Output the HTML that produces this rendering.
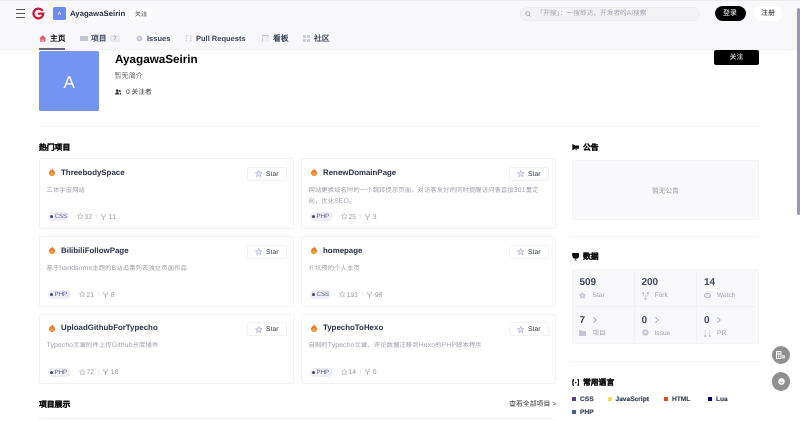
<!DOCTYPE html>
<html lang="zh-CN"><head><meta charset="utf-8">
<style>
*{box-sizing:border-box;margin:0;padding:0}
html,body{width:800px;height:421px;overflow:hidden;background:#fff;text-rendering:geometricPrecision;font-family:"Liberation Sans",sans-serif;color:#1f2329}
.a{position:absolute;white-space:nowrap}
.hdr{position:absolute;left:0;top:0;width:800px;height:50px;background:#f8f8fa}
.topline{position:absolute;left:0;top:0;width:800px;height:1px;background:#ebebee}
.ham{position:absolute;left:16px;width:9px;height:1px;background:#5a5a5a}
.nav{font-size:7.8px;font-weight:bold;color:#40485b;top:34.5px;line-height:8px}
.card{position:absolute;width:255px;height:70.5px;border:1px solid #f2f2f5;border-radius:2px;background:#fff}
.ttl{position:absolute;left:21px;top:8.5px;font-size:7.9px;font-weight:bold;color:#2e3447;white-space:nowrap;line-height:10px}
.flame{position:absolute;left:9px;top:9px;width:6px;height:8px}
.lt{font-size:6.9px;letter-spacing:0.1px}
.desc{position:absolute;left:6.5px;top:25.5px;font-size:6.3px;letter-spacing:0.12px;color:#a2a3ad;line-height:11px;width:238px}
.sbtn{position:absolute;left:207px;top:7.5px;width:40px;height:14px;border:1px solid #f2f2f5;border-radius:2px;background:#fff}
.sbtn svg{position:absolute;left:6.8px;top:2.6px}
.sbtn span{position:absolute;left:18px;top:3px;font-size:6.8px;color:#2e3447;line-height:8px}
.tag{position:absolute;left:7.5px;top:53px;height:9px;border-radius:4.5px;background:#efeef7;font-size:6.2px;color:#5a5f85;line-height:10px;padding:0 3px 0 7px}
.tag:before{content:"";position:absolute;left:2.5px;top:3px;width:3px;height:3px;border-radius:50%;background:#3d4160}
.cnt{position:absolute;top:54.3px;font-size:6.8px;color:#9a9ba6;line-height:9px}
.meta{position:absolute;left:7.5px;top:53px;height:9px;display:flex;align-items:center;white-space:nowrap}
.tag2{position:relative;height:9px;border-radius:4.5px;background:#efeef7;font-size:6.2px;color:#5a5f85;line-height:10px;padding:0 0 0 7px;flex:none}
.tag2 i{position:absolute;left:2.5px;top:3px;width:3px;height:3px;border-radius:50%;background:#3d4160}
.ic{display:block;line-height:0;flex:none}
.num{font-size:6.8px;color:#9a9ba6;line-height:9px;flex:none;position:relative;top:0.9px}
.sep{display:block;width:0.8px;height:5px;background:#eeeef2;margin:0 4px;flex:none}
.cnt svg{position:absolute;top:1.5px}
.sec{font-size:7.8px;font-weight:900;color:#111;line-height:9px;-webkit-text-stroke:0.25px #111}
.line{position:absolute;height:1px;background:#f4f4f6}
</style></head><body style="will-change:transform">
<div class="hdr"></div>
<div class="topline"></div>
<div class="a" style="left:0;top:49px;width:800px;height:1px;background:#f2f2f4"></div>
<div class="ham" style="top:9px"></div>
<div class="ham" style="top:13px"></div>
<div class="ham" style="top:17px"></div>
<svg class="a" style="left:32px;top:7px" width="13" height="13" viewBox="0 0 13 13"><path d="M10 3.1 A4.9 4.9 0 1 0 11.3 6.7 L6.9 6.7" fill="none" stroke="#c71d3a" stroke-width="2.3" stroke-linecap="round"/></svg>
<div class="a" style="left:53px;top:7px;width:13px;height:13px;background:#6b8cee;border-radius:1.5px;color:#fff;font-size:5px;line-height:15px;text-align:center">A</div>
<div class="a" style="left:70px;top:9px;font-size:7.8px;font-weight:bold;color:#2e3447;line-height:9px">AyagawaSeirin</div>
<div class="a" style="left:130px;top:8px;width:22px;height:12px;background:#fff;border-radius:2px;font-size:6.3px;color:#444;line-height:14px;text-align:center">关注</div>

<div class="a" style="left:520px;top:6.5px;width:180px;height:14px;background:#f3f3f6;border:1px solid #ededf1;border-radius:7px"></div>
<svg class="a" style="left:525px;top:10.5px" width="6" height="6" viewBox="0 0 6 6"><circle cx="2.6" cy="2.6" r="2" fill="none" stroke="#9a9aa4" stroke-width="0.8"/><path d="M4 4 L5.5 5.5" stroke="#9a9aa4" stroke-width="0.8"/></svg>
<div class="a" style="left:536.5px;top:9.5px;font-size:6.7px;color:#a5a6b0;line-height:8px">「开搜」：一搜即达，开发者的AI搜索</div>
<div class="a" style="left:714.5px;top:5.5px;width:31px;height:15.5px;background:#000;border-radius:8px;color:#fff;font-size:6.9px;line-height:16.5px;text-align:center">登录</div>
<div class="a" style="left:753.5px;top:5.5px;width:29px;height:15.5px;background:#fff;border-radius:8px;color:#222;font-size:6.9px;line-height:16.5px;text-align:center">注册</div>

<!-- nav -->
<svg class="a" style="left:39px;top:34.5px" width="7.5" height="7" viewBox="0 0 7.5 7"><path d="M3.75 0.3 L7.2 3.4 L6.3 3.4 L6.3 6.7 L1.2 6.7 L1.2 3.4 L0.3 3.4 Z" fill="#e25a6c"/><path d="M2.6 6.7 V4.6 H4.9 V6.7" fill="#f3b5bd"/></svg>
<div class="a nav" style="left:50px;color:#000;font-weight:900">主页</div>
<div class="a" style="left:39px;top:47.8px;width:26px;height:2px;background:#66676f"></div>
<div class="a" style="left:80px;top:36px;width:7.5px;height:5px;background:#c4c5d4;border-radius:0.5px"></div>
<div class="a nav" style="left:91px">项目</div>
<div class="a" style="left:110px;top:35px;width:10px;height:7px;background:#e8e8ee;border-radius:1.5px;font-size:5.5px;color:#8a8b98;line-height:8px;text-align:center">7</div>
<svg class="a" style="left:136px;top:35px" width="7" height="7" viewBox="0 0 7 7"><circle cx="3.5" cy="3.5" r="2.8" fill="#c4c5d4"/><circle cx="3.5" cy="3.5" r="1" fill="#f8f8fa"/></svg>
<div class="a nav" style="left:147px;font-size:7.5px">Issues</div>
<svg class="a" style="left:185px;top:34.5px" width="7" height="7.5" viewBox="0 0 7 7.5"><path d="M1.2 0.5 V7 M5.8 0.5 V7" fill="none" stroke="#bdbdcc" stroke-width="1" stroke-dasharray="1.3 0.9"/><path d="M2.4 0.8 H3.6 M3.4 6.7 H4.6" stroke="#c8c8d6" stroke-width="0.8"/></svg>
<div class="a nav" style="left:196px;font-size:7.5px">Pull Requests</div>
<svg class="a" style="left:261.5px;top:35px" width="7" height="7" viewBox="0 0 7 7"><rect x="0" y="0" width="7" height="1.3" fill="#c4c5d4"/><rect x="0" y="2.2" width="1.2" height="4.8" fill="#d2d2de"/><rect x="2.5" y="2.2" width="4.5" height="4.8" fill="#ededf2"/></svg>
<div class="a nav" style="left:273px">看板</div>
<svg class="a" style="left:303px;top:35px" width="7" height="7" viewBox="0 0 7 7"><rect x="0" y="0" width="3" height="3" fill="#cdcdda"/><rect x="4" y="0" width="3" height="3" fill="#cdcdda"/><rect x="0" y="4" width="3" height="3" fill="#cdcdda"/><rect x="4" y="4" width="3" height="3" fill="#cdcdda"/></svg>
<div class="a nav" style="left:314px">社区</div>

<!-- profile -->
<div class="a" style="left:39px;top:50.7px;width:60.2px;height:60px;background:#7394f0;border-radius:1.5px;color:#fff;font-size:17px;line-height:64px;text-align:center">A</div>
<div class="a" style="left:115px;top:53px;font-size:11.7px;font-weight:bold;color:#000;line-height:14px">AyagawaSeirin</div>
<div class="a" style="left:114.5px;top:72px;font-size:7.1px;color:#666;line-height:9px">暂无简介</div>
<svg class="a" style="left:114.5px;top:89px" width="6.5" height="5.8" viewBox="0 0 6 5"><circle cx="2" cy="1.3" r="1.2" fill="#333"/><path d="M0 5 Q0 2.6 2 2.6 Q4 2.6 4 5Z" fill="#333"/><circle cx="4.4" cy="1.6" r="0.9" fill="#333"/><path d="M4.4 5 L6 5 Q6 3 4.6 3Z" fill="#333"/></svg>
<div class="a" style="left:126px;top:87.5px;font-size:6.7px;color:#333;line-height:9px">0 关注者</div>
<div class="a" style="left:714px;top:50px;width:45px;height:15.3px;background:#000;border-radius:2px;color:#fff;font-size:6.7px;line-height:16px;text-align:center">关注</div>

<div class="line" style="left:39px;top:126px;width:720px"></div>

<!-- left: hot projects -->
<div class="a sec" style="left:39px;top:143px">热门项目</div>

<div class="card" style="left:39px;top:158px"><svg class="flame" viewBox="0 0 6 8"><path d="M2.9 0.2 C3.6 1.5 6 3 6 5.1 C6 6.8 4.7 8 3 8 C1.3 8 0 6.8 0 5.1 C0 3.4 1.6 2.6 2 1.6 C2.3 2.2 2.4 2.6 2.5 3 C2.8 2.2 2.9 1.2 2.9 0.2Z" fill="#ea7324"/><path d="M3 3.4 C3.8 4.3 4.9 5 4.9 6 C4.9 7 4.1 7.6 3 7.6 C1.9 7.6 1.1 7 1.1 6 C1.1 5 2.3 4.4 3 3.4Z" fill="#f8a23a"/></svg><div class="ttl">ThreebodySpace</div>
<div class="sbtn"><svg width="7.5" height="7.5" viewBox="0 0 10 10"><path d="M5 0.6 L6.3 3.4 L9.4 3.7 L7.1 5.8 L7.8 8.9 L5 7.3 L2.2 8.9 L2.9 5.8 L0.6 3.7 L3.7 3.4Z" fill="#ebebf3" stroke="#a9a9c6" stroke-width="0.9" stroke-linejoin="round"/></svg><span>Star</span></div>
<div class="desc">三体宇宙网站</div>
<div class="meta"><div class="tag2" style="width:21px"><i></i>CSS</div><span class="ic" style="margin-left:8px"><svg width="6.5" height="6.5" viewBox="0 0 10 10"><path d="M5 0.6 L6.3 3.4 L9.4 3.7 L7.1 5.8 L7.8 8.9 L5 7.3 L2.2 8.9 L2.9 5.8 L0.6 3.7 L3.7 3.4Z" fill="none" stroke="#a0a1ad" stroke-width="0.9" stroke-linejoin="round"/></svg></span><span class="num" style="margin-left:1.5px">32</span><span class="sep"></span><span class="ic" style="margin-left:0"><svg width="5" height="6" viewBox="0 0 5 6"><path d="M0.8 0 V1.6 Q0.8 3 2.5 3 Q4.2 3 4.2 1.6 V0 M2.5 3 V6" fill="none" stroke="#a0a1ad" stroke-width="0.8"/></svg></span><span class="num" style="margin-left:3px">11</span></div>
</div>
<div class="card" style="left:301px;top:158px"><svg class="flame" viewBox="0 0 6 8"><path d="M2.9 0.2 C3.6 1.5 6 3 6 5.1 C6 6.8 4.7 8 3 8 C1.3 8 0 6.8 0 5.1 C0 3.4 1.6 2.6 2 1.6 C2.3 2.2 2.4 2.6 2.5 3 C2.8 2.2 2.9 1.2 2.9 0.2Z" fill="#ea7324"/><path d="M3 3.4 C3.8 4.3 4.9 5 4.9 6 C4.9 7 4.1 7.6 3 7.6 C1.9 7.6 1.1 7 1.1 6 C1.1 5 2.3 4.4 3 3.4Z" fill="#f8a23a"/></svg><div class="ttl">RenewDomainPage</div>
<div class="sbtn"><svg width="7.5" height="7.5" viewBox="0 0 10 10"><path d="M5 0.6 L6.3 3.4 L9.4 3.7 L7.1 5.8 L7.8 8.9 L5 7.3 L2.2 8.9 L2.9 5.8 L0.6 3.7 L3.7 3.4Z" fill="#ebebf3" stroke="#a9a9c6" stroke-width="0.9" stroke-linejoin="round"/></svg><span>Star</span></div>
<div class="desc">网站更换域名时的一个跳转提示页面，对访客友好的同时提醒访问者直接<span class="lt">301</span>重定<br>向，优化<span class="lt">SEO</span>。</div>
<div class="meta"><div class="tag2" style="width:23px"><i></i>PHP</div><span class="ic" style="margin-left:8px"><svg width="6.5" height="6.5" viewBox="0 0 10 10"><path d="M5 0.6 L6.3 3.4 L9.4 3.7 L7.1 5.8 L7.8 8.9 L5 7.3 L2.2 8.9 L2.9 5.8 L0.6 3.7 L3.7 3.4Z" fill="none" stroke="#a0a1ad" stroke-width="0.9" stroke-linejoin="round"/></svg></span><span class="num" style="margin-left:1.5px">25</span><span class="sep"></span><span class="ic" style="margin-left:0"><svg width="5" height="6" viewBox="0 0 5 6"><path d="M0.8 0 V1.6 Q0.8 3 2.5 3 Q4.2 3 4.2 1.6 V0 M2.5 3 V6" fill="none" stroke="#a0a1ad" stroke-width="0.8"/></svg></span><span class="num" style="margin-left:3px">3</span></div>
</div>
<div class="card" style="left:39px;top:236px"><svg class="flame" viewBox="0 0 6 8"><path d="M2.9 0.2 C3.6 1.5 6 3 6 5.1 C6 6.8 4.7 8 3 8 C1.3 8 0 6.8 0 5.1 C0 3.4 1.6 2.6 2 1.6 C2.3 2.2 2.4 2.6 2.5 3 C2.8 2.2 2.9 1.2 2.9 0.2Z" fill="#ea7324"/><path d="M3 3.4 C3.8 4.3 4.9 5 4.9 6 C4.9 7 4.1 7.6 3 7.6 C1.9 7.6 1.1 7 1.1 6 C1.1 5 2.3 4.4 3 3.4Z" fill="#f8a23a"/></svg><div class="ttl">BilibiliFollowPage</div>
<div class="sbtn"><svg width="7.5" height="7.5" viewBox="0 0 10 10"><path d="M5 0.6 L6.3 3.4 L9.4 3.7 L7.1 5.8 L7.8 8.9 L5 7.3 L2.2 8.9 L2.9 5.8 L0.6 3.7 L3.7 3.4Z" fill="#ebebf3" stroke="#a9a9c6" stroke-width="0.9" stroke-linejoin="round"/></svg><span>Star</span></div>
<div class="desc">基于<span class="lt">handsome</span>主题的<span class="lt">B</span>站追番列表独立页面作品</div>
<div class="meta"><div class="tag2" style="width:23px"><i></i>PHP</div><span class="ic" style="margin-left:8px"><svg width="6.5" height="6.5" viewBox="0 0 10 10"><path d="M5 0.6 L6.3 3.4 L9.4 3.7 L7.1 5.8 L7.8 8.9 L5 7.3 L2.2 8.9 L2.9 5.8 L0.6 3.7 L3.7 3.4Z" fill="none" stroke="#a0a1ad" stroke-width="0.9" stroke-linejoin="round"/></svg></span><span class="num" style="margin-left:1.5px">21</span><span class="sep"></span><span class="ic" style="margin-left:0"><svg width="5" height="6" viewBox="0 0 5 6"><path d="M0.8 0 V1.6 Q0.8 3 2.5 3 Q4.2 3 4.2 1.6 V0 M2.5 3 V6" fill="none" stroke="#a0a1ad" stroke-width="0.8"/></svg></span><span class="num" style="margin-left:3px">8</span></div>
</div>
<div class="card" style="left:301px;top:236px"><svg class="flame" viewBox="0 0 6 8"><path d="M2.9 0.2 C3.6 1.5 6 3 6 5.1 C6 6.8 4.7 8 3 8 C1.3 8 0 6.8 0 5.1 C0 3.4 1.6 2.6 2 1.6 C2.3 2.2 2.4 2.6 2.5 3 C2.8 2.2 2.9 1.2 2.9 0.2Z" fill="#ea7324"/><path d="M3 3.4 C3.8 4.3 4.9 5 4.9 6 C4.9 7 4.1 7.6 3 7.6 C1.9 7.6 1.1 7 1.1 6 C1.1 5 2.3 4.4 3 3.4Z" fill="#f8a23a"/></svg><div class="ttl">homepage</div>
<div class="sbtn"><svg width="7.5" height="7.5" viewBox="0 0 10 10"><path d="M5 0.6 L6.3 3.4 L9.4 3.7 L7.1 5.8 L7.8 8.9 L5 7.3 L2.2 8.9 L2.9 5.8 L0.6 3.7 L3.7 3.4Z" fill="#ebebf3" stroke="#a9a9c6" stroke-width="0.9" stroke-linejoin="round"/></svg><span>Star</span></div>
<div class="desc">开坑预的个人主页</div>
<div class="meta"><div class="tag2" style="width:21px"><i></i>CSS</div><span class="ic" style="margin-left:8px"><svg width="6.5" height="6.5" viewBox="0 0 10 10"><path d="M5 0.6 L6.3 3.4 L9.4 3.7 L7.1 5.8 L7.8 8.9 L5 7.3 L2.2 8.9 L2.9 5.8 L0.6 3.7 L3.7 3.4Z" fill="none" stroke="#a0a1ad" stroke-width="0.9" stroke-linejoin="round"/></svg></span><span class="num" style="margin-left:1.5px">193</span><span class="sep"></span><span class="ic" style="margin-left:0"><svg width="5" height="6" viewBox="0 0 5 6"><path d="M0.8 0 V1.6 Q0.8 3 2.5 3 Q4.2 3 4.2 1.6 V0 M2.5 3 V6" fill="none" stroke="#a0a1ad" stroke-width="0.8"/></svg></span><span class="num" style="margin-left:3px">98</span></div>
</div>
<div class="card" style="left:39px;top:313.5px"><svg class="flame" viewBox="0 0 6 8"><path d="M2.9 0.2 C3.6 1.5 6 3 6 5.1 C6 6.8 4.7 8 3 8 C1.3 8 0 6.8 0 5.1 C0 3.4 1.6 2.6 2 1.6 C2.3 2.2 2.4 2.6 2.5 3 C2.8 2.2 2.9 1.2 2.9 0.2Z" fill="#ea7324"/><path d="M3 3.4 C3.8 4.3 4.9 5 4.9 6 C4.9 7 4.1 7.6 3 7.6 C1.9 7.6 1.1 7 1.1 6 C1.1 5 2.3 4.4 3 3.4Z" fill="#f8a23a"/></svg><div class="ttl">UploadGithubForTypecho</div>
<div class="sbtn"><svg width="7.5" height="7.5" viewBox="0 0 10 10"><path d="M5 0.6 L6.3 3.4 L9.4 3.7 L7.1 5.8 L7.8 8.9 L5 7.3 L2.2 8.9 L2.9 5.8 L0.6 3.7 L3.7 3.4Z" fill="#ebebf3" stroke="#a9a9c6" stroke-width="0.9" stroke-linejoin="round"/></svg><span>Star</span></div>
<div class="desc"><span class="lt">Typecho</span>文章附件上传<span class="lt">Github</span>仓库插件</div>
<div class="meta"><div class="tag2" style="width:23px"><i></i>PHP</div><span class="ic" style="margin-left:8px"><svg width="6.5" height="6.5" viewBox="0 0 10 10"><path d="M5 0.6 L6.3 3.4 L9.4 3.7 L7.1 5.8 L7.8 8.9 L5 7.3 L2.2 8.9 L2.9 5.8 L0.6 3.7 L3.7 3.4Z" fill="none" stroke="#a0a1ad" stroke-width="0.9" stroke-linejoin="round"/></svg></span><span class="num" style="margin-left:1.5px">72</span><span class="sep"></span><span class="ic" style="margin-left:0"><svg width="5" height="6" viewBox="0 0 5 6"><path d="M0.8 0 V1.6 Q0.8 3 2.5 3 Q4.2 3 4.2 1.6 V0 M2.5 3 V6" fill="none" stroke="#a0a1ad" stroke-width="0.8"/></svg></span><span class="num" style="margin-left:3px">18</span></div>
</div>
<div class="card" style="left:301px;top:313.5px"><svg class="flame" viewBox="0 0 6 8"><path d="M2.9 0.2 C3.6 1.5 6 3 6 5.1 C6 6.8 4.7 8 3 8 C1.3 8 0 6.8 0 5.1 C0 3.4 1.6 2.6 2 1.6 C2.3 2.2 2.4 2.6 2.5 3 C2.8 2.2 2.9 1.2 2.9 0.2Z" fill="#ea7324"/><path d="M3 3.4 C3.8 4.3 4.9 5 4.9 6 C4.9 7 4.1 7.6 3 7.6 C1.9 7.6 1.1 7 1.1 6 C1.1 5 2.3 4.4 3 3.4Z" fill="#f8a23a"/></svg><div class="ttl">TypechoToHexo</div>
<div class="sbtn"><svg width="7.5" height="7.5" viewBox="0 0 10 10"><path d="M5 0.6 L6.3 3.4 L9.4 3.7 L7.1 5.8 L7.8 8.9 L5 7.3 L2.2 8.9 L2.9 5.8 L0.6 3.7 L3.7 3.4Z" fill="#ebebf3" stroke="#a9a9c6" stroke-width="0.9" stroke-linejoin="round"/></svg><span>Star</span></div>
<div class="desc">自制的<span class="lt">Typecho</span>文章、评论数据迁移到<span class="lt">Hexo</span>的<span class="lt">PHP</span>脚本程序</div>
<div class="meta"><div class="tag2" style="width:23px"><i></i>PHP</div><span class="ic" style="margin-left:8px"><svg width="6.5" height="6.5" viewBox="0 0 10 10"><path d="M5 0.6 L6.3 3.4 L9.4 3.7 L7.1 5.8 L7.8 8.9 L5 7.3 L2.2 8.9 L2.9 5.8 L0.6 3.7 L3.7 3.4Z" fill="none" stroke="#a0a1ad" stroke-width="0.9" stroke-linejoin="round"/></svg></span><span class="num" style="margin-left:1.5px">14</span><span class="sep"></span><span class="ic" style="margin-left:0"><svg width="5" height="6" viewBox="0 0 5 6"><path d="M0.8 0 V1.6 Q0.8 3 2.5 3 Q4.2 3 4.2 1.6 V0 M2.5 3 V6" fill="none" stroke="#a0a1ad" stroke-width="0.8"/></svg></span><span class="num" style="margin-left:3px">0</span></div>
</div>

<div class="a sec" style="left:39px;top:400px">项目展示</div>
<div class="a" style="left:509px;top:399.5px;font-size:6.9px;color:#333;line-height:9px">查看全部项目 &gt;</div>
<div class="a" style="left:39px;top:418px;width:517px;height:10px;border:1px solid #f0f0f4;border-radius:3px"></div>

<!-- right column -->
<svg class="a" style="left:571.5px;top:144px" width="7.5" height="6.5" viewBox="0 0 7.5 6.5"><path d="M0.3 0 L3.2 1.6 H6.6 Q7.5 1.6 7.5 3.2 Q7.5 4.8 6.6 4.8 H3.2 L0.3 6.5Z" fill="#111"/><path d="M3.3 4.8 H5 V6.2 H3.8Z" fill="#444"/></svg>
<div class="a sec" style="left:583px;top:142.5px">公告</div>
<div class="a" style="left:572px;top:160px;width:187px;height:59.5px;background:#f9f9fb;border:1px solid #f4f4f7;border-radius:1px;font-size:6.8px;color:#9b9ca6;line-height:61px;text-align:center">暂无公告</div>
<div class="line" style="left:572px;top:235.5px;width:187px"></div>

<svg class="a" style="left:571.5px;top:252.5px" width="7.5" height="8.5" viewBox="0 0 7.5 8.5"><path d="M0.2 0 H7.3 Q7.6 3 6.6 4.6 Q5.6 6 3.75 6 Q1.9 6 0.9 4.6 Q-0.1 3 0.2 0Z" fill="#111"/><rect x="3.2" y="6" width="1.1" height="1.6" fill="#555"/><rect x="2" y="7.6" width="3.5" height="0.9" fill="#888"/></svg>
<div class="a sec" style="left:583px;top:252px">数据</div>
<div class="a" style="left:572px;top:269px;width:187px;height:75px;background:#f8f8fb;border:1px solid #f4f4f7;border-radius:1px"></div>
<div class="a" style="left:634px;top:272px;width:1px;height:69px;background:#f2f2f6"></div>
<div class="a" style="left:696px;top:272px;width:1px;height:69px;background:#f2f2f6"></div>
<div class="a" style="left:576px;top:306px;width:179px;height:1px;background:#f1f1f5"></div>
<div class="a" style="left:579.5px;top:277px;font-size:10px;font-weight:bold;color:#40485b;line-height:11px">509</div>
<div class="a" style="left:592.5px;top:292px;font-size:6.6px;color:#a2a3ad;line-height:8px">Star</div>
<div class="a" style="left:579.0px;top:291.8px;line-height:0"><svg width="7" height="7" viewBox="0 0 10 10"><path d="M5 0.8 L6.3 3.5 L9.3 3.8 L7.1 5.8 L7.7 8.8 L5 7.3 L2.3 8.8 L2.9 5.8 L0.7 3.8 L3.7 3.5Z" fill="#dedee8" stroke="#b8b8c8" stroke-width="1.1" stroke-linejoin="round"/></svg></div>
<div class="a" style="left:641.5px;top:277px;font-size:10px;font-weight:bold;color:#40485b;line-height:11px">200</div>
<div class="a" style="left:654.5px;top:292px;font-size:6.6px;color:#a2a3ad;line-height:8px">Fork</div>
<div class="a" style="left:641.7px;top:291.5px;line-height:0"><svg width="7" height="8" viewBox="0 0 7 8"><circle cx="1.2" cy="1.2" r="1.1" fill="#b8b8c8"/><circle cx="5.8" cy="1.2" r="1.1" fill="#b8b8c8"/><circle cx="3.5" cy="6.8" r="1.1" fill="#b8b8c8"/><path d="M1.2 1.5 V3 Q1.2 4 2.2 4 H4.8 Q5.8 4 5.8 3 V1.5 M3.5 4 V6.5" fill="none" stroke="#c3c3d3" stroke-width="0.7"/></svg></div>
<div class="a" style="left:704px;top:277px;font-size:10px;font-weight:bold;color:#40485b;line-height:11px">14</div>
<div class="a" style="left:717px;top:292px;font-size:6.6px;color:#a2a3ad;line-height:8px">Watch</div>
<div class="a" style="left:704px;top:293px;line-height:0"><svg width="7" height="5" viewBox="0 0 7 5"><ellipse cx="3.5" cy="2.5" rx="3" ry="2" fill="none" stroke="#bdbdcd" stroke-width="1.2"/><circle cx="3.5" cy="2.5" r="0.8" fill="#d5d5e0"/></svg></div>
<div class="a" style="left:579.5px;top:315px;font-size:10px;font-weight:bold;color:#40485b;line-height:11px">7</div>
<svg class="a" style="left:592.5px;top:317px" width="4" height="6" viewBox="0 0 4 6"><path d="M0.5 0.5 L3.3 3 L0.5 5.5" fill="none" stroke="#8a8c99" stroke-width="0.8"/></svg>
<div class="a" style="left:592.5px;top:330px;font-size:6.6px;color:#a2a3ad;line-height:8px">项目</div>
<div class="a" style="left:579.0px;top:330.2px;line-height:0"><svg width="7" height="6" viewBox="0 0 7 6"><path d="M0 0.3 H2.6 L3.3 1 H7 V6 H0Z" fill="#c4c3d8"/></svg></div>
<div class="a" style="left:641.5px;top:315px;font-size:10px;font-weight:bold;color:#40485b;line-height:11px">0</div>
<svg class="a" style="left:654.5px;top:317px" width="4" height="6" viewBox="0 0 4 6"><path d="M0.5 0.5 L3.3 3 L0.5 5.5" fill="none" stroke="#8a8c99" stroke-width="0.8"/></svg>
<div class="a" style="left:654.5px;top:330px;font-size:6.6px;color:#a2a3ad;line-height:8px">Issue</div>
<div class="a" style="left:641.5px;top:329px;line-height:0"><svg width="7" height="7" viewBox="0 0 7 7"><circle cx="3.5" cy="3.5" r="3.2" fill="#c9c8da"/><circle cx="3.5" cy="3.5" r="1" fill="#f7f7fa"/></svg></div>
<div class="a" style="left:704px;top:315px;font-size:10px;font-weight:bold;color:#40485b;line-height:11px">0</div>
<svg class="a" style="left:717px;top:317px" width="4" height="6" viewBox="0 0 4 6"><path d="M0.5 0.5 L3.3 3 L0.5 5.5" fill="none" stroke="#8a8c99" stroke-width="0.8"/></svg>
<div class="a" style="left:717px;top:330px;font-size:6.6px;color:#a2a3ad;line-height:8px">PR</div>
<div class="a" style="left:704px;top:329.5px;line-height:0"><svg width="7" height="7" viewBox="0 0 7 7"><path d="M1.2 0.5 V6.5 M5.8 0.5 V6.5" fill="none" stroke="#c0c0d0" stroke-width="1" stroke-dasharray="1.2 0.8"/><circle cx="1.2" cy="6" r="0.9" fill="#b8b8cc"/><circle cx="5.8" cy="6" r="0.9" fill="#b8b8cc"/></svg></div>

<div class="line" style="left:572px;top:360.5px;width:187px"></div>
<svg class="a" style="left:571.5px;top:379px" width="7.5" height="7" viewBox="0 0 7.5 7"><path d="M2 0.5 Q1 0.5 1 1.5 V2.6 Q1 3.5 0.3 3.5 Q1 3.5 1 4.4 V5.5 Q1 6.5 2 6.5 M5.5 0.5 Q6.5 0.5 6.5 1.5 V2.6 Q6.5 3.5 7.2 3.5 Q6.5 3.5 6.5 4.4 V5.5 Q6.5 6.5 5.5 6.5" fill="none" stroke="#111" stroke-width="1.4"/><circle cx="3.75" cy="3.6" r="0.8" fill="#111"/></svg>
<div class="a sec" style="left:583px;top:378px">常用语言</div>
<div class="a" style="left:572px;top:397.2px;width:4.2px;height:4.2px;background:#563d7c"></div>
<div class="a" style="left:580px;top:396.2px;font-size:6.6px;font-weight:bold;color:#3a4256;line-height:8px;-webkit-text-stroke:0.15px #3a4256">CSS</div>
<div class="a" style="left:607.5px;top:397.2px;width:4.2px;height:4.2px;background:#f1e05a"></div>
<div class="a" style="left:615.5px;top:396.2px;font-size:6.6px;font-weight:bold;color:#3a4256;line-height:8px;-webkit-text-stroke:0.15px #3a4256">JavaScript</div>
<div class="a" style="left:664px;top:397.2px;width:4.2px;height:4.2px;background:#e34c26"></div>
<div class="a" style="left:672px;top:396.2px;font-size:6.6px;font-weight:bold;color:#3a4256;line-height:8px;-webkit-text-stroke:0.15px #3a4256">HTML</div>
<div class="a" style="left:708px;top:397.2px;width:4.2px;height:4.2px;background:#000080"></div>
<div class="a" style="left:716px;top:396.2px;font-size:6.6px;font-weight:bold;color:#3a4256;line-height:8px;-webkit-text-stroke:0.15px #3a4256">Lua</div>
<div class="a" style="left:572px;top:410.2px;width:4.2px;height:4.2px;background:#4f5d95"></div>
<div class="a" style="left:580px;top:409.2px;font-size:6.6px;font-weight:bold;color:#3a4256;line-height:8px;-webkit-text-stroke:0.15px #3a4256">PHP</div>

<!-- floating buttons -->
<div class="a" style="left:771.8px;top:345.8px;width:18.4px;height:18.4px;border-radius:50%;background:#8f8f8f"></div>
<svg class="a" style="left:776px;top:351px" width="10" height="8" viewBox="0 0 10 8"><path d="M0.5 0.5 H5 V7.5 H0.5Z" fill="none" stroke="#fff" stroke-width="1"/><path d="M0.5 3 H5 M2.7 0.5 V7.5" stroke="#fff" stroke-width="0.8"/><rect x="6" y="4" width="3" height="3.5" fill="#d8d8d8"/></svg>
<div class="a" style="left:771.8px;top:372.4px;width:18.4px;height:18.4px;border-radius:50%;background:#8f8f8f"></div>
<svg class="a" style="left:777.5px;top:378px" width="7" height="7" viewBox="0 0 7 7"><circle cx="3.5" cy="3.5" r="3.2" fill="#fff"/><path d="M1.8 3.8 Q3.5 5.6 5.2 3.8" fill="none" stroke="#8f8f8f" stroke-width="0.8"/></svg>

<!-- scrollbar -->
<div class="a" style="left:797.3px;top:7.5px;width:3px;height:207.5px;background:#9a98b0;border-radius:1.5px"></div>
</body></html>
